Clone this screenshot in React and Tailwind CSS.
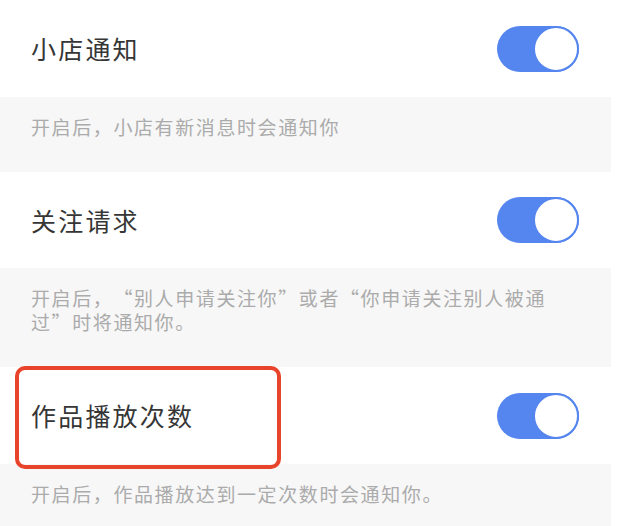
import React from "react";

const settings = [
  {
    title: "小店通知",
    desc: "开启后，小店有新消息时会通知你",
    rowH: "h-[97px]",
  },
  {
    title: "关注请求",
    desc: "开启后，“别人申请关注你”或者“你申请关注别人被通过”时将通知你。",
    rowH: "h-[96px]",
  },
  {
    title: "作品播放次数",
    desc: "开启后，作品播放达到一定次数时会通知你。",
    rowH: "h-[97px]",
    marked: true,
  },
];

function Toggle() {
  return (
    <div className="flex h-[46px] w-[82px] items-center justify-end rounded-full bg-[#5585ef]">
      <div className="h-[46px] w-[46px] rounded-full border-2 border-[#5585ef] bg-white" />
    </div>
  );
}

export default function App() {
  return (
    <div
      className="min-h-[526px] w-full bg-white"
      style={{ fontFamily: '"Noto Sans CJK SC", "Noto Sans", sans-serif' }}
    >
      <div className="w-[611px]">
        {settings.map((s) => (
          <div key={s.title}>
            <div className={`relative flex ${s.rowH} items-center justify-between pl-[31px] pr-[32px]`}>
              <span className="text-[25px] leading-none tracking-[2.2px] text-[#363636]">
                {s.title}
              </span>
              <Toggle />
              {s.marked && (
                <div className="absolute left-[15px] top-[-1px] z-10 h-[103px] w-[266px] rounded-[10px] border-[4px] border-[#e8432b]" />
              )}
            </div>
            <div className="bg-[#f7f7f7] pb-[33px] pl-[31px] pr-[56px] pt-[18px]">
              <p className="text-[19px] leading-[24px] tracking-[1.6px] text-[#ababab] [text-spacing-trim:space-all]">
                {s.desc}
              </p>
            </div>
          </div>
        ))}
      </div>
    </div>
  );
}
